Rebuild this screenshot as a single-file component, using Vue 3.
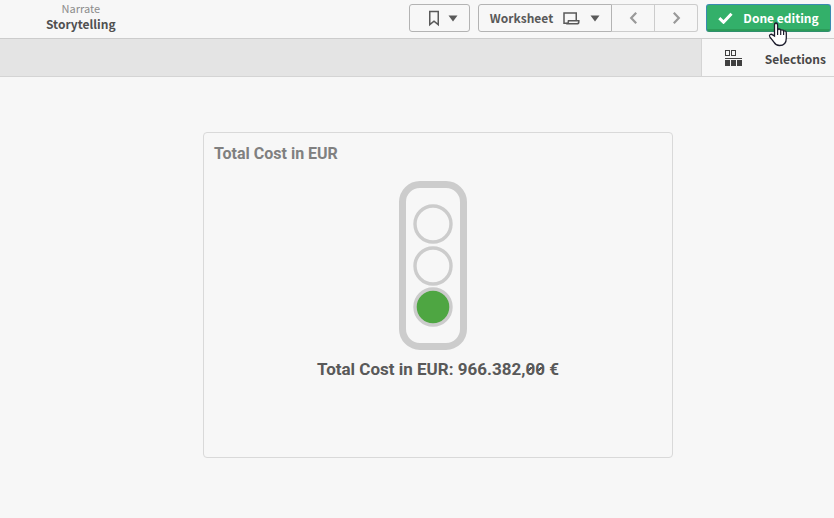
<script setup>
const sheetTitle = 'Storytelling'
const kpi = { title: 'Total Cost in EUR', value: '966.382,00 €' }
const valueChars = [...kpi.value]
const lamps = [
  { cy: 44, on: false },
  { cy: 86, on: false },
  { cy: 127, on: true },
]
</script>

<template>
  <div class="page">
    <header class="toolbar">
      <div class="heading">
        <span class="mode">Narrate</span>
        <h1 class="name">{{ sheetTitle }}</h1>
      </div>
      <nav class="actions">
        <button class="btn bookmark" type="button" aria-label="Bookmarks">
          <svg width="12" height="17" viewBox="0 0 12 17"><path d="M1.750 1.500h8.500v13.200L6 11.200l-4.250 3.500z" fill="none" stroke="#595959" stroke-width="1.500" /></svg>
          <svg width="10" height="7" viewBox="0 0 10 7"><path d="M0.500 0.500h9L5 6.500z" fill="#595959" /></svg>
        </button>
        <div class="group">
          <button class="btn worksheet" type="button">
            <span>Worksheet</span>
            <svg width="17" height="13" viewBox="0 0 17 13" fill="none" stroke="#595959" stroke-width="1.500">
              <path d="M13.250 8.500V1H1v10.200h3" />
              <path d="M5.500 8.700h10.300v1.200q0 1.900-2 1.900H3.200q2.300-.2 2.300-3.100z" />
            </svg>
            <svg width="10" height="7" viewBox="0 0 10 7"><path d="M0.500 0.500h9L5 6.500z" fill="#595959" /></svg>
          </button>
          <button class="btn step" type="button" aria-label="Previous sheet">
            <svg width="9" height="14" viewBox="0 0 9 14"><path d="M7.200 1.800L2.200 7l5 5.200" fill="none" stroke="#999" stroke-width="2.200" /></svg>
          </button>
          <button class="btn step last" type="button" aria-label="Next sheet">
            <svg width="9" height="14" viewBox="0 0 9 14"><path d="M1.800 1.800l5 5.200-5 5.200" fill="none" stroke="#999" stroke-width="2.200" /></svg>
          </button>
        </div>
        <button class="btn done" type="button">
          <svg width="15" height="12" viewBox="0 0 15 12"><path d="M1.300 6.200l4.200 4L13.500 1.800" fill="none" stroke="#fff" stroke-width="3" /></svg>
          <span>Done editing</span>
          <svg class="pointer" width="20" height="25" viewBox="0 0 20 25">
            <path d="M6.500 14V3.200Q6.500 1 8 1t1.600 2.200V8q.3-1.100 1.500-1 1.500.1 1.600 1.600.4-.9 1.400-.8 1.400.1 1.500 1.600.4-.7 1.200-.6 1.500.1 1.500 1.900V16q0 7.500-6.800 7.500-3.700 0-5.400-3.100L1.800 14.800q-.8-1.700.4-2.300 1.400-.6 2.500.4z" fill="#fff" stroke="#1c1c2c" stroke-width="1.300" />
            <path d="M9.600 7.500V13M12.700 8.500V13M15.600 9.500V13" fill="none" stroke="#1c1c2c" stroke-width="1.200" />
          </svg>
        </button>
      </nav>
    </header>

    <div class="selection-bar">
      <button class="selections" type="button">
        <svg width="18" height="17" viewBox="0 0 18 17" shape-rendering="crispEdges">
          <path d="M0 0h5v6H0zM1 1v4h3V1zM6 0h5v6H6zM7 1v4h3V1z" fill="#404040" fill-rule="evenodd" />
          <path d="M0 8h17v1H0zM0 10h5v6H0zM6 10h5v6H6zM12 10h5v6h-5z" fill="#404040" />
        </svg>
        <span>Selections</span>
      </button>
    </div>

    <main class="sheet">
      <section class="card">
        <h2 class="card-title">{{ kpi.title }}</h2>
        <div class="kpi">
          <svg class="light" width="70" height="170" viewBox="0 0 70 170" role="img" aria-label="Green light">
            <rect x="4.500" y="4.500" width="61" height="162" rx="17.500" fill="none" stroke="#ccc" stroke-width="7" />
            <circle v-for="lamp in lamps" :key="lamp.cy" cx="35" :cy="lamp.cy" r="18" :fill="lamp.on ? '#4ea642' : '#f7f7f7'" stroke="#ccc" stroke-width="3.400" />
          </svg>
          <p class="kpi-text">{{ kpi.title }}: <span v-for="(char, i) in valueChars" :key="i" :class="{ zero: char === '0' }">{{ char }}</span></p>
        </div>
      </section>
    </main>
  </div>
</template>

<style>
body {
  background: #f7f7f7;
}
</style>

<style scoped>
.page {
  font-family: "Noto Sans CJK SC", "Noto Sans", sans-serif;
  font-size: 12px;
  font-weight: 700;
  color: #595959;
}
.toolbar {
  display: flex;
  justify-content: space-between;
  align-items: flex-start;
  padding: 0 3px 0 46px;
  height: 38px;
  border-bottom: 1px solid #ccc;
}
.heading {
  display: flex;
  flex-direction: column;
  align-items: center;
  padding-top: 1px;
}
.mode {
  font-size: 11px;
  line-height: 15px;
  font-weight: 400;
  color: #8c8c8c;
}
.name {
  margin: 0;
  font-size: 12px;
  line-height: 16px;
  font-weight: 700;
  color: #505050;
}
.actions {
  display: flex;
  gap: 8px;
  padding-top: 4px;
}
.group {
  display: flex;
}
.btn {
  box-sizing: border-box;
  display: flex;
  align-items: center;
  justify-content: center;
  height: 28px;
  padding: 0;
  border: 1px solid #b3b3b3;
  border-radius: 3px;
  background: transparent;
  color: #595959;
  font: inherit;
  line-height: 20px;
}
.bookmark {
  width: 61px;
  gap: 8px;
  padding-left: 6px;
}
.worksheet {
  width: 134px;
  gap: 10px;
  border-radius: 3px 0 0 3px;
}
.step {
  width: 43px;
  border-color: #ccc;
  border-left: 0;
  border-radius: 0;
}
.last {
  border-radius: 0 3px 3px 0;
}
.done {
  position: relative;
  width: 125px;
  gap: 10px;
  border-color: #3a8ab0;
  border-bottom-color: #2f8f6d;
  background: linear-gradient(#33b06a 0 24px, #2c9b58 24px);
  color: #fff;
}
.pointer {
  position: absolute;
  left: 61px;
  top: 17px;
}
.selection-bar {
  display: flex;
  justify-content: flex-end;
  height: 37px;
  border-bottom: 1px solid #d4d4d4;
  background: #e4e4e4;
}
.selections {
  display: flex;
  align-items: center;
  gap: 22px;
  padding: 2px 8px 0 23px;
  border: 0;
  border-left: 1px solid #d4d4d4;
  background: #f7f7f7;
  color: #484848;
  font: inherit;
}
.sheet {
  padding: 55px 161px 60px 203px;
}
.card {
  padding: 9px 10px 76px;
  border: 1px solid #d9d9d9;
  border-radius: 4px;
  font-family: Roboto, "Liberation Sans", sans-serif;
  font-weight: 700;
}
.card-title {
  margin: 0;
  font-size: 16px;
  line-height: 24px;
  color: #808080;
}
.kpi {
  display: flex;
  flex-direction: column;
  align-items: center;
  padding-top: 14px;
}
.light {
  display: block;
  margin-right: 11px;
}
.kpi-text {
  margin: 7px 0 0;
  font-size: 17px;
  line-height: 24px;
}
/* Slashed zero, so the digit is not read as a letter O */
.zero {
  background: linear-gradient(145deg, transparent 40%, currentColor 40% 60%, transparent 60%) center / 6px 8px no-repeat;
}
</style>
